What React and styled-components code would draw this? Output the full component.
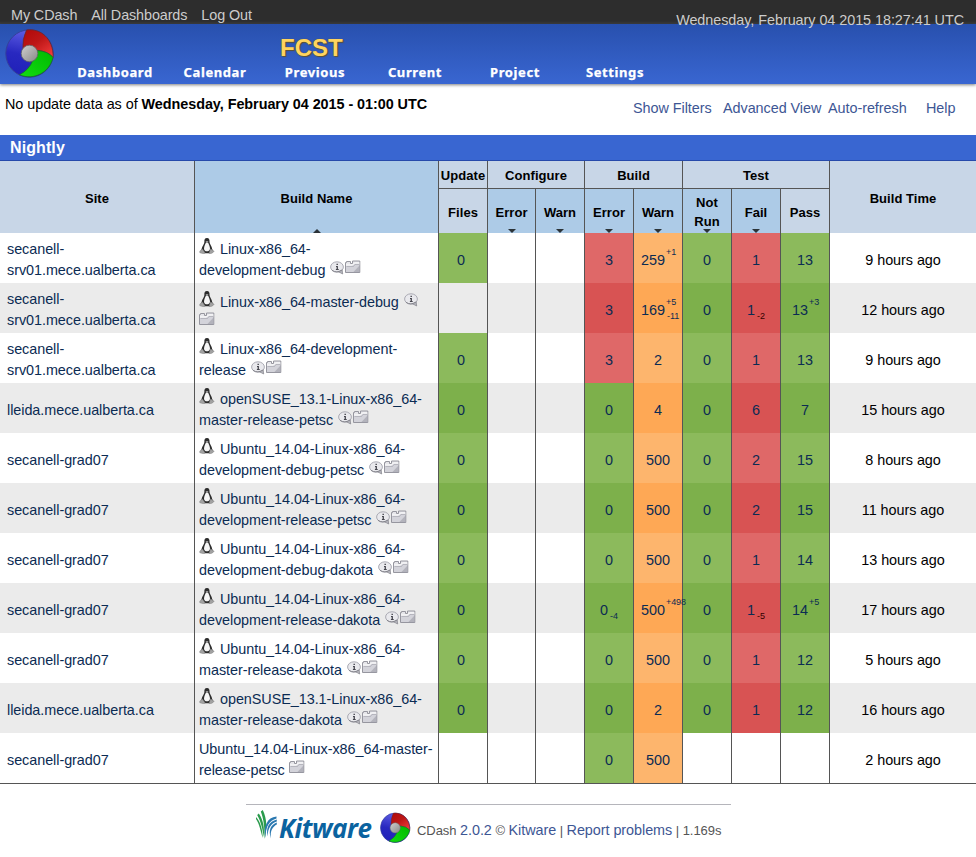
import React from 'react';
import styled, { createGlobalStyle } from 'styled-components';

const GlobalStyle = createGlobalStyle`
  * { box-sizing: border-box; }
  body {
    margin: 0;
    background: #fff;
    color: #000;
    font-family: "Liberation Sans", Arial, sans-serif;
    font-size: 14.4px;
    letter-spacing: -0.05px;
  }
`;

const Page = styled.div`
  width: 976px;
  height: 857px;
  overflow: hidden;
`;

const TopBar = styled.div`
  display: flex;
  justify-content: space-between;
  height: 24px;
  padding: 0 12px 0 11px;
  background: linear-gradient(#2d2d2d 0 21px, #393939 23px, #3f4247 24px);
  color: #ccc;
  white-space: nowrap;
`;

const TopLinks = styled.div`
  display: flex;
  gap: 14px;
  line-height: 30px;
  letter-spacing: -0.11px;
`;

const Clock = styled.div`
  position: relative;
  z-index: 1;
  line-height: 40px;
`;

const Header = styled.header`
  display: flex;
  height: 60px;
  padding: 4px 0 0 5px;
  background: linear-gradient(#2850ae, #3966d1);
  box-shadow: 0 1px 3px rgba(0, 0, 0, 0.5);
`;

const HeaderMain = styled.div`
  margin-left: 10px;
`;

const ProjectName = styled.h1`
  margin: 3px 0 0 215px;
  height: 33px;
  line-height: 33px;
  font-size: 24px;
  font-weight: bold;
  letter-spacing: 0;
  color: #ffd45f;
  text-shadow: 1px 1px 1px #5d5230, 0 0 1px #5d5230;
`;

const Nav = styled.nav`
  display: grid;
  grid-template-columns: repeat(6, 100px);
  text-align: center;
  color: #fff;
  font: bold 13px/17px "Noto Sans", sans-serif;
  letter-spacing: 0.6px;
  -webkit-text-stroke: 0.25px #fff;
`;

const Info = styled.div`
  display: flex;
  justify-content: space-between;
  height: 51px;
  padding: 9px 21px 0 5px;
  white-space: nowrap;
  line-height: 22px;
`;

const Actions = styled.div`
  display: grid;
  grid-template-columns: 90px 105px 98px 29px;
  padding-top: 4px;
  color: #3d5694;
`;

const GroupTitle = styled.h2`
  margin: 0;
  height: 26px;
  padding-left: 10px;
  line-height: 25px;
  font-size: 16px;
  letter-spacing: 0.1px;
  color: #fff;
  background: #3966d1;
  border-bottom: 1px solid #264aab;
`;

const Table = styled.table`
  width: 976px;
  table-layout: fixed;
  border-collapse: separate;
  border-spacing: 0;
  border-bottom: 1px solid #555;
`;

const Th = styled.th`
  position: relative;
  padding: ${p => p.$pad || '3px 0 0'};
  height: ${p => p.$h || 'auto'};
  line-height: 19px;
  font-size: 13px;
  letter-spacing: 0.05px;
  white-space: nowrap;
  background: ${p => (p.$sorted ? '#adcbe7' : '#c8d6e7')};
  border-left: ${p => (p.$first ? 0 : '1px solid #555')};
  border-bottom: ${p => (p.$line ? '1px solid #555' : 0)};
`;

const Arrow = styled.i`
  position: absolute;
  left: calc(50% - 4px);
  bottom: 0;
  border: 4px solid transparent;
  border-width: ${p => (p.$up ? '0 4px 4px' : '4px 4px 0')};
  border-${p => (p.$up ? 'bottom' : 'top')}-color: #2b3338;
`;

const Row = styled.tr`
  height: 50px;
  background: ${p => (p.$alt ? '#ebebeb' : '#fff')};
`;

const Cell = styled.td`
  height: 50px;
  padding: 5px 0 0;
  text-align: center;
  line-height: 21px;
  white-space: nowrap;
  color: #000;
  border-left: 1px solid #555;
`;

const SiteCell = styled(Cell)`
  padding: ${p => (p.$two ? 4 : 5)}px 0 0 7px;
  text-align: left;
  border-left: 0;
  color: #0b2b53;
`;

const NameCell = styled(Cell)`
  padding: 5px 0 0 4px;
  text-align: left;
  vertical-align: top;
  color: #0b2b53;
`;

const fills = {
  ok: ['#8cba5c', '#7db04b'],
  bad: ['#df6868', '#d85353'],
  warn: ['#fdb56d', '#fea855'],
};

const CountCell = styled(Cell)`
  padding-right: ${p => (p.$shift ? 4 : 0)}px;
  color: #0b2b53;
  background: ${p => (p.$kind ? fills[p.$kind][p.$alt ? 1 : 0] : 'transparent')};
`;

const Count = styled.span`
  display: inline-flex;
  align-items: center;
`;

const Deltas = styled.span`
  position: relative;
  align-self: stretch;
  width: ${p => p.$w}px;
  font-size: 9px;
  line-height: 10px;
`;

const Delta = styled.span`
  position: absolute;
  z-index: 1;
  left: ${p => (p.$down ? 2 : 1)}px;
  top: ${p => (p.$down ? 11 : -3)}px;
  color: ${p => (p.$dark ? '#300' : 'inherit')};
`;

const NameLine = styled.div`
  display: flex;
  height: 21px;
  line-height: 23px;
`;

const IconSlot = styled.span`
  display: flex;
  width: ${p => p.$w}px;
  padding-top: ${p => p.$top || 0}px;
  margin-left: ${p => p.$ml || 0}px;
`;

const WrappedName = styled.div`
  padding-top: 3px;
  svg { display: block; }
`;

const Footer = styled.footer`
  display: flex;
  align-items: flex-start;
  width: 485px;
  margin: 20px 0 0 246px;
  padding: 5px 0 0 10px;
  border-top: 1px solid #b5b5bb;
  font-size: 13px;
  color: #555;
`;

const FooterLogo = styled.span`
  display: flex;
  padding-top: 2px;
`;

const FooterText = styled.div`
  margin-left: 6px;
  line-height: 41px;
  white-space: pre;
`;

const Link = styled.a`
  font-size: 14.4px;
  color: #3d5694;
`;

const Wordmark = styled.span`
  margin: 1px 0 0 1px;
  width: 101px;
  font: italic bold 26px/34px "Open Sans", sans-serif;
  letter-spacing: -0.45px;
  color: #0b63a0;
`;

function CDashLogo({ size, id }) {
  return (
    <svg width={size} height={size} viewBox="0 0 50 50">
      <defs>
        <linearGradient id={id + 'b'} x1="0.6" y1="0" x2="0.4" y2="1">
          <stop offset="0" stopColor="#6262e6" /><stop offset=".55" stopColor="#2828c0" /><stop offset="1" stopColor="#2020b8" />
        </linearGradient>
        <linearGradient id={id + 'r'} x1="0" y1="0" x2=".8" y2="1">
          <stop offset="0" stopColor="#b00808" /><stop offset=".5" stopColor="#bd1717" /><stop offset="1" stopColor="#ee3838" />
        </linearGradient>
        <linearGradient id={id + 'g'} x1="0" y1="1" x2="1" y2="0">
          <stop offset="0" stopColor="#12dd12" /><stop offset="1" stopColor="#00b800" />
        </linearGradient>
        <linearGradient id={id + 'c'} x1="0" y1="0" x2="1" y2="1">
          <stop offset="0" stopColor="#d0d0d0" /><stop offset="1" stopColor="#888" />
        </linearGradient>
      </defs>
      <circle cx="24.5" cy="25.500" r="23.700" fill={`url(#${id}b)`} stroke="#35409a" strokeWidth="1" />
      <path d="M21.500 2C35 0 48.500 10 48.200 29.500 Q42 23 32 22.500 L18 22 Q17 11 21.500 2Z" fill={`url(#${id}r)`} stroke="#66292f" strokeWidth=".8" />
      <path d="M32 22.500 Q43 23 48 29.500 C45 44 29 53 14.500 46.800 Q24 42 28 32Z" fill={`url(#${id}g)`} stroke="#19692d" strokeWidth=".8" />
      <circle cx="24.500" cy="25.500" r="8.300" fill={`url(#${id}c)`} stroke="#666" strokeWidth=".8" />
    </svg>
  );
}

function Penguin() {
  return (
    <svg width="16" height="16" viewBox="0 0 16 16">
      <path d="M8 0C5.600 0 5.200 1.800 5.400 4 5.500 6.200 3 8 2.600 11L1.800 13.500 5 15.300h6l3.200-1.800-1-2.500C12.900 8 10.600 6 10.500 4 10.700 1.800 10.200 0 8 0Z" fill="#2c2c2c" />
      <path d="M7 4.600C6.400 6 5 8.500 5 10.800 5 14 10.500 14.300 11 11 11.200 8.500 9.600 6 9.200 4.700Z" fill="#f6f6f6" />
      <path d="M.8 13 3.400 11 6.200 15 4.500 15.700.8 14.800ZM10 15.300 11.500 10.800 15.200 13.200 13.500 14.900 11.300 15.800Z" fill="#a2a2a2" stroke="#777" strokeWidth=".4" />
      <path d="M6.500 3.300h3L8 4.900Z" fill="#bbb" />
    </svg>
  );
}

function InfoIcon() {
  return (
    <svg width="15" height="14" viewBox="0 0 15 14">
      <ellipse cx="7" cy="6" rx="6.400" ry="5.200" fill="#e9e9ed" stroke="#a3a3ad" strokeWidth=".9" />
      <path d="M2 9.300Q6.500 12.500 12 9" fill="none" stroke="#77777f" strokeWidth=".8" />
      <path d="M8.500 10.800 12.700 13 12.200 9Z" fill="#b5b5bd" stroke="#77777f" strokeWidth=".6" />
      <path d="M6.500 2.800h1.400v1.300H6.500zM6 5.100h1.900v3h.8v.8H5.900v-.8h.7V5.900H6z" fill="#44444c" />
    </svg>
  );
}

function FolderIcon() {
  return (
    <svg width="16" height="14" viewBox="0 0 16 14">
      <path d="M.5 12.500V2.500H1.500V1.500H5.500V3.500H7.500V1H14.800V12.500Z" fill="#e6e6ea" stroke="#96969f" />
      <path d="M1 12V5.500H7.500L9.500 3.500H14.300V12Z" fill="#d3d3da" />
      <path d="M1 5H7.500L9.500 3H14.500" fill="none" stroke="#fff" />
      <path d="M1.500 6.500H8.500L10 4.500H14" fill="none" stroke="#a9a9b2" strokeWidth=".7" />
      <path d="M8 12.500 15 5V12.500Z" fill="#9e9ea8" opacity=".6" />
    </svg>
  );
}

function KitwareMark() {
  return (
    <svg width="22" height="31" viewBox="0 0 22 31">
      <g fill="#2b9b4d">
        <path d="M6.800 0C11.200 9 11 19 8.600 29 8.600 18 7.800 9 4.800 1.500Z" />
        <path d="M2.800 3.500C7.500 10 8.400 18 8 27 6.300 19 5.300 12 1.200 5Z" />
        <path d="M0 7C4.800 12 6.500 20 6.800 28 4.500 21 3.500 14 0 9Z" />
      </g>
      <g fill="#2a78b0">
        <path d="M20.500 6.500C11 7.500 7.500 16 9.200 28 10 16 13 10.500 20.500 8.500Z" />
        <path d="M20.800 9.500C13 11.500 9.500 18 11.800 26.500 11.500 18 15.500 13 20.800 11.500Z" />
        <path d="M20.800 12.500C15 14.500 12 20 15 28.500 13.800 20.500 17 16.500 20.800 14.500Z" />
      </g>
    </svg>
  );
}

const SRV = ['secanell-', 'srv01.mece.ualberta.ca'];
const GRAD = ['secanell-grad07'];
const LLEIDA = ['lleida.mece.ualberta.ca'];

const n = (value, kind, up, down, w = 0) => ({ value, kind, up, down, w });
const none = n('', null);
const ok = v => n(v, 'ok');
const bad = v => n(v, 'bad');
const warn = v => n(v, 'warn');

const builds = [
  { site: SRV, name: ['Linux-x86_64-', 'development-debug'], time: '9 hours', counts: [ok('0'), bad('3'), n('259', 'warn', '+1', '', 10), ok('0'), bad('1'), ok('13')] },
  { site: SRV, name: ['Linux-x86_64-master-debug', ''], time: '12 hours', counts: [none, bad('3'), n('169', 'warn', '+5', '-11', 10), ok('0'), n('1', 'bad', '', '-2', 10), n('13', 'ok', '+3', '', 10)] },
  { site: SRV, name: ['Linux-x86_64-development-', 'release'], time: '9 hours', counts: [ok('0'), bad('3'), warn('2'), ok('0'), bad('1'), ok('13')] },
  { site: LLEIDA, name: ['openSUSE_13.1-Linux-x86_64-', 'master-release-petsc'], time: '15 hours', counts: [ok('0'), ok('0'), warn('4'), ok('0'), bad('6'), ok('7')] },
  { site: GRAD, name: ['Ubuntu_14.04-Linux-x86_64-', 'development-debug-petsc'], time: '8 hours', counts: [ok('0'), ok('0'), warn('500'), ok('0'), bad('2'), ok('15')] },
  { site: GRAD, name: ['Ubuntu_14.04-Linux-x86_64-', 'development-release-petsc'], time: '11 hours', counts: [ok('0'), ok('0'), warn('500'), ok('0'), bad('2'), ok('15')] },
  { site: GRAD, name: ['Ubuntu_14.04-Linux-x86_64-', 'development-debug-dakota'], time: '13 hours', counts: [ok('0'), ok('0'), warn('500'), ok('0'), bad('1'), ok('14')] },
  { site: GRAD, name: ['Ubuntu_14.04-Linux-x86_64-', 'development-release-dakota'], time: '17 hours', counts: [ok('0'), n('0', 'ok', '', '-4', 10), n('500', 'warn', '+498', '', 10), ok('0'), n('1', 'bad', '', '-5', 10), n('14', 'ok', '+5', '', 10)] },
  { site: GRAD, name: ['Ubuntu_14.04-Linux-x86_64-', 'master-release-dakota'], time: '5 hours', counts: [ok('0'), ok('0'), warn('500'), ok('0'), bad('1'), ok('12')] },
  { site: LLEIDA, name: ['openSUSE_13.1-Linux-x86_64-', 'master-release-dakota'], time: '16 hours', counts: [ok('0'), ok('0'), warn('2'), ok('0'), bad('1'), ok('12')] },
  { site: GRAD, plain: true, name: ['Ubuntu_14.04-Linux-x86_64-master-', 'release-petsc'], time: '2 hours', counts: [none, ok('0'), warn('500'), none, none, none] },
];

function CountTd({ c, alt, shift }) {
  return (
    <CountCell $kind={c.kind} $alt={alt} $shift={shift}>
      <Count>
        {c.value}
        {c.w > 0 && (
          <Deltas $w={c.w}>
            {c.up && <Delta>{c.up}</Delta>}
            {c.down && <Delta $down $dark={c.kind === 'bad'}>{c.down}</Delta>}
          </Deltas>
        )}
      </Count>
    </CountCell>
  );
}

function BuildName({ build }) {
  const [first, second] = build.name;
  const info = <IconSlot $w={15} $top={2} $ml={5}><InfoIcon /></IconSlot>;
  if (!second) {
    return (
      <NameCell>
        <WrappedName>
          <NameLine><IconSlot $w={21}><Penguin /></IconSlot>{first}{info}</NameLine>
          <FolderIcon />
        </WrappedName>
      </NameCell>
    );
  }
  return (
    <NameCell>
      <NameLine>
        {!build.plain && <IconSlot $w={21}><Penguin /></IconSlot>}
        {first}
      </NameLine>
      <NameLine>
        {second}
        {!build.plain && info}
        <IconSlot $w={16} $top={1} $ml={build.plain ? 4 : 0}><FolderIcon /></IconSlot>
      </NameLine>
    </NameCell>
  );
}

export default function App() {
  return (
    <Page>
      <GlobalStyle />
      <TopBar>
        <TopLinks><span>My CDash</span><span>All Dashboards</span><span>Log Out</span></TopLinks>
        <Clock>Wednesday, February 04 2015 18:27:41 UTC</Clock>
      </TopBar>
      <Header>
        <CDashLogo size={50} id="top" />
        <HeaderMain>
          <ProjectName>FCST</ProjectName>
          <Nav>
            {['Dashboard', 'Calendar', 'Previous', 'Current', 'Project', 'Settings'].map(t => <span key={t}>{t}</span>)}
          </Nav>
        </HeaderMain>
      </Header>
      <Info>
        <span>No update data as of <b>Wednesday, February 04 2015 - 01:00 UTC</b></span>
        <Actions><span>Show Filters</span><span>Advanced View</span><span>Auto-refresh</span><span>Help</span></Actions>
      </Info>
      <GroupTitle>Nightly</GroupTitle>
      <Table>
        <colgroup>
          {[194, 244, 49, 48, 49, 49, 49, 49, 49, 49, 147].map((w, i) => <col key={i} width={w} />)}
        </colgroup>
        <thead>
          <tr>
            <Th $first rowSpan={2}>Site</Th>
            <Th $sorted rowSpan={2}>Build Name<Arrow $up /></Th>
            <Th $line $h="28px" $pad="1px 0 0">Update</Th>
            <Th $line $pad="1px 0 0" colSpan={2}>Configure</Th>
            <Th $line $pad="1px 0 0" colSpan={2}>Build</Th>
            <Th $line $pad="1px 0 0" colSpan={3}>Test</Th>
            <Th rowSpan={2}>Build Time</Th>
          </tr>
          <tr>
            <Th $h="44px">Files</Th>
            {['Error', 'Warn', 'Error', 'Warn'].map((t, i) => <Th key={i} $sorted>{t}<Arrow /></Th>)}
            <Th $sorted $pad="1px 0 0">Not<br />Run<Arrow /></Th>
            <Th $sorted>Fail<Arrow /></Th>
            <Th>Pass</Th>
          </tr>
        </thead>
        <tbody>
          {builds.map((b, i) => {
            const alt = i % 2 === 1;
            const [update, ...rest] = b.counts;
            return (
              <Row key={i} $alt={alt}>
                <SiteCell $two={b.site.length > 1}>{b.site.map(s => <div key={s}>{s}</div>)}</SiteCell>
                <BuildName build={b} />
                <CountTd c={update} alt={alt} shift />
                <Cell />
                <Cell />
                {rest.map((c, j) => <CountTd key={j} c={c} alt={alt} />)}
                <Cell>{b.time} ago</Cell>
              </Row>
            );
          })}
        </tbody>
      </Table>
      <Footer>
        <KitwareMark />
        <Wordmark>Kitware</Wordmark>
        <FooterLogo><CDashLogo size={31} id="foot" /></FooterLogo>
        <FooterText>CDash <Link>2.0.2</Link> © <Link>Kitware</Link> | <Link>Report problems</Link> | 1.169s</FooterText>
      </Footer>
    </Page>
  );
}
